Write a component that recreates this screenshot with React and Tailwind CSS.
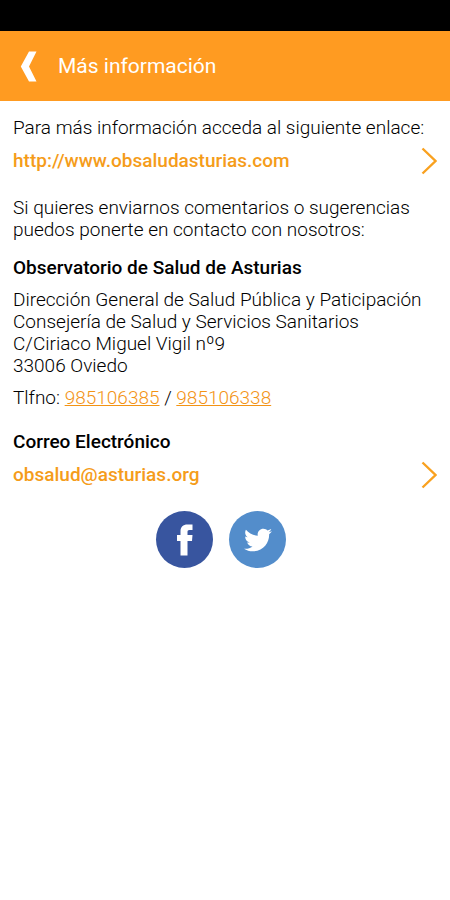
import { FaTwitter } from "react-icons/fa";

function Chevron() {
  return (
    <svg className="h-7 w-4 shrink-0" viewBox="0 0 16 28" fill="none" stroke="#f9a11f" strokeWidth="2.4" aria-hidden="true">
      <path d="M1.5 1.5 14.5 14 1.5 26.5" />
    </svg>
  );
}

function LinkRow({ href, children }) {
  return (
    <a href={href} className="flex h-7 items-center justify-between font-medium text-[#f59c1a]">
      <span>{children}</span>
      <Chevron />
    </a>
  );
}

export default function App() {
  return (
    <div className="min-h-screen bg-white font-[Roboto,sans-serif] text-[19px] font-light leading-[22px] text-black">
      <div className="h-[31px] bg-black" />
      <header className="flex h-[70px] items-center bg-[#ff9b21] pl-5 text-white">
        <button type="button" aria-label="Volver" className="mr-5 flex h-8 w-[18px] items-center">
          <svg className="h-8 w-[18px]" viewBox="0 0 18 32" fill="white" aria-hidden="true">
            <path d="M9 1.500H16.500L9 16.500L16.500 31.500H9L0.800 16.500Z" />
          </svg>
        </button>
        <h1 className="text-[21px] font-normal leading-7">Más información</h1>
      </header>
      <main className="px-[13px] pt-4">
        <p>Para más información acceda al siguiente enlace:</p>
        <div className="mt-2">
          <LinkRow href="http://www.obsaludasturias.com">http://www.obsaludasturias.com</LinkRow>
        </div>
        <p className="mt-[22px]">
          Si quieres enviarnos comentarios o sugerencias puedos ponerte en contacto con nosotros:
        </p>
        <h2 className="mt-4 font-medium">Observatorio de Salud de Asturias</h2>
        <address className="mt-2.5 not-italic">
          Dirección General de Salud Pública y Paticipación
          <br />
          Consejería de Salud y Servicios Sanitarios
          <br />
          C/Ciriaco Miguel Vigil nº9
          <br />
          33006 Oviedo
        </address>
        <p className="mt-2.5">
          Tlfno:{" "}
          <a href="tel:985106385" className="text-[#f39314] underline">985106385</a>
          {" / "}
          <a href="tel:985106338" className="text-[#f39314] underline">985106338</a>
        </p>
        <h2 className="mt-[22px] font-medium">Correo Electrónico</h2>
        <div className="mt-2">
          <LinkRow href="mailto:obsalud@asturias.org">obsalud@asturias.org</LinkRow>
        </div>
        <div className="mt-[22px] flex justify-center gap-4 pr-2 text-white">
          <a href="https://www.facebook.com" aria-label="Facebook" className="flex size-[57px] items-center justify-center rounded-full bg-[#38559f]">
            <svg className="h-8 w-4" viewBox="0 0 16 32" fill="currentColor" aria-hidden="true">
              <path d="M3.500 31.500V17H0V11H3.500V7.500C3.500 2.800 6 0.500 10.500 0.500H15.500V6H12.500C10.800 6 10.500 6.800 10.500 8V11H15.500L15 17H10.500V31.500Z" />
            </svg>
          </a>
          <a href="https://twitter.com" aria-label="Twitter" className="flex size-[57px] items-center justify-center rounded-full bg-[#538dcb]">
            <FaTwitter className="size-7" />
          </a>
        </div>
      </main>
    </div>
  );
}
